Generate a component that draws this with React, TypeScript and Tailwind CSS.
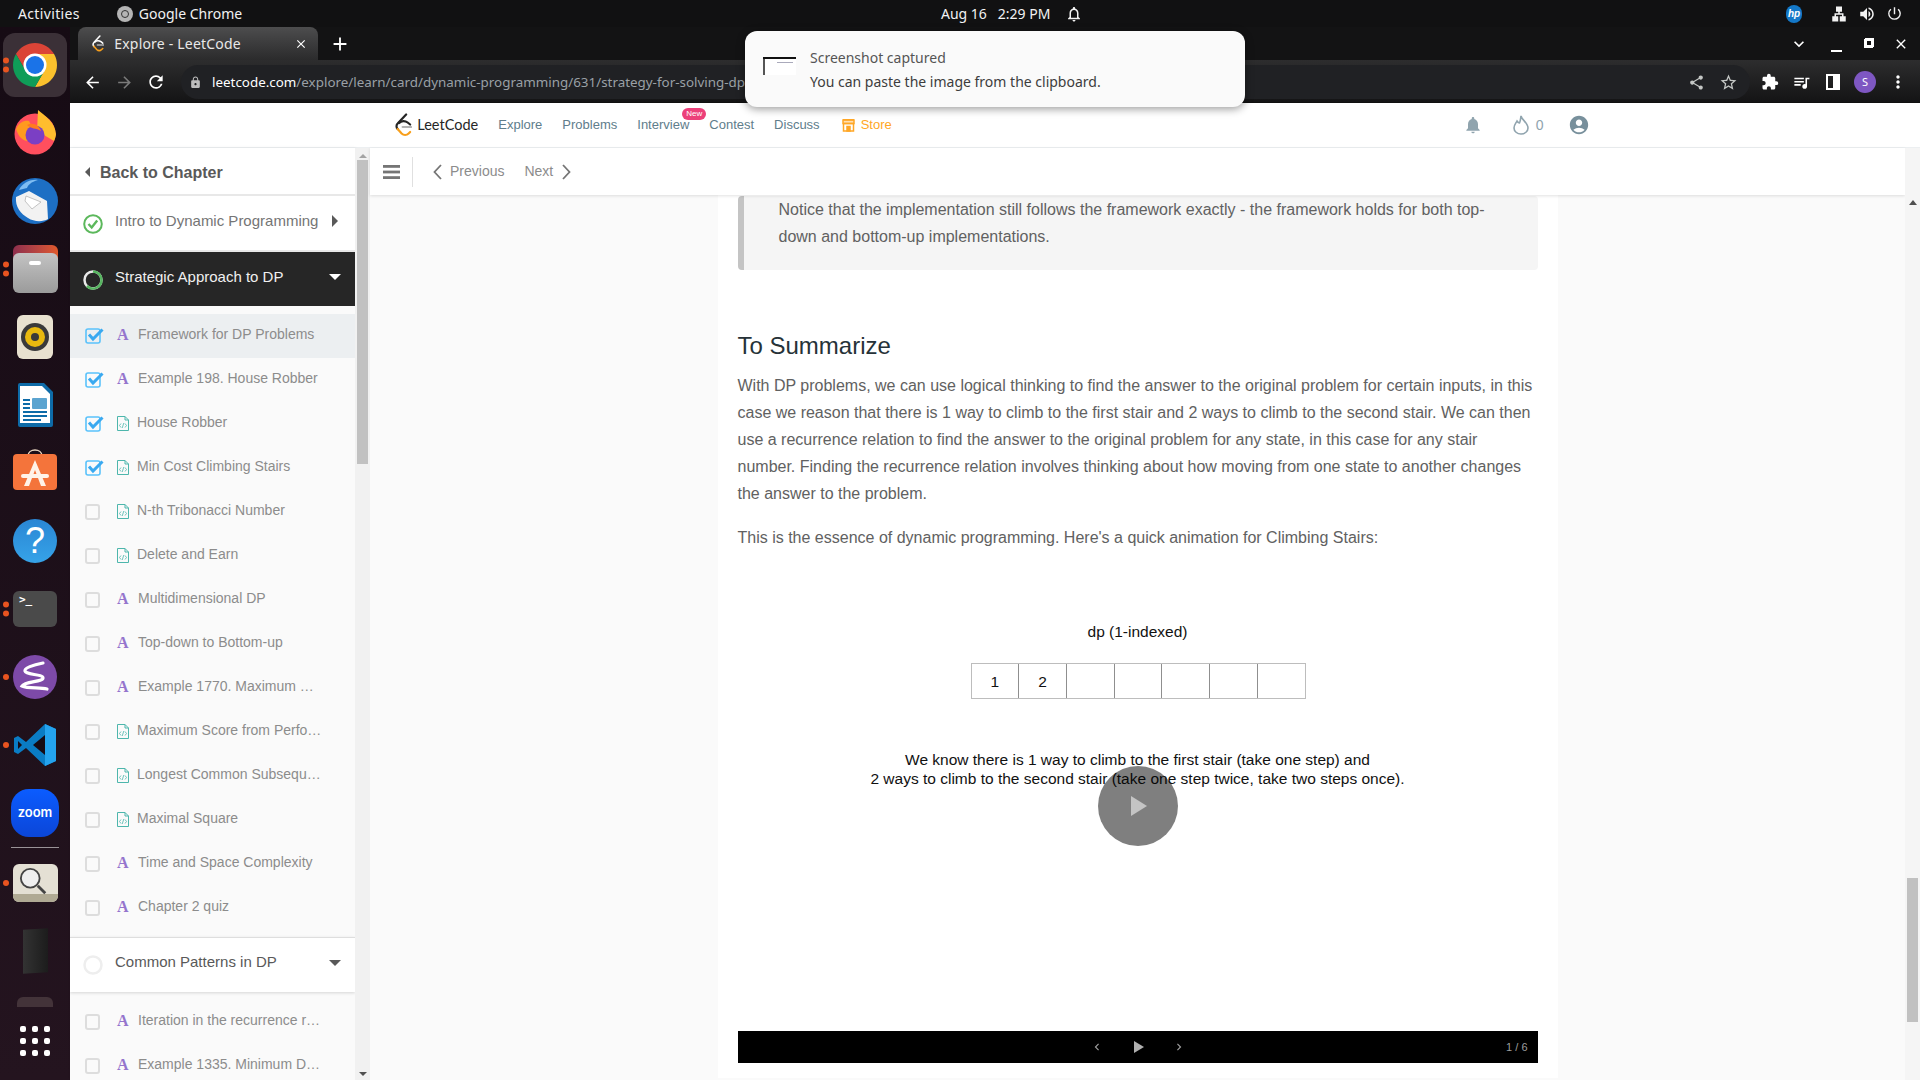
import {
  MdArrowBack,
  MdArrowForward,
  MdRefresh,
  MdLock,
  MdShare,
  MdStarBorder,
  MdExtension,
  MdQueueMusic,
  MdMoreVert,
  MdNotifications,
  MdAccountCircle,
  MdClose,
  MdAdd,
  MdKeyboardArrowDown,
  MdChevronLeft,
  MdChevronRight,
  MdVolumeUp,
  MdPowerSettingsNew,
  MdLan,
  MdNotificationsNone,
} from "react-icons/md";

type Item = { title: string; kind: "article" | "code"; done?: boolean; active?: boolean };

const chapterTwo: Item[] = [
  { title: "Framework for DP Problems", kind: "article", done: true, active: true },
  { title: "Example 198. House Robber", kind: "article", done: true },
  { title: "House Robber", kind: "code", done: true },
  { title: "Min Cost Climbing Stairs", kind: "code", done: true },
  { title: "N-th Tribonacci Number", kind: "code" },
  { title: "Delete and Earn", kind: "code" },
  { title: "Multidimensional DP", kind: "article" },
  { title: "Top-down to Bottom-up", kind: "article" },
  { title: "Example 1770. Maximum …", kind: "article" },
  { title: "Maximum Score from Perfo…", kind: "code" },
  { title: "Longest Common Subsequ…", kind: "code" },
  { title: "Maximal Square", kind: "code" },
  { title: "Time and Space Complexity", kind: "article" },
  { title: "Chapter 2 quiz", kind: "article" },
];

const chapterThree: Item[] = [
  { title: "Iteration in the recurrence r…", kind: "article" },
  { title: "Example 1335. Minimum D…", kind: "article" },
];

function ChromeLogo({ size }: { size: number }) {
  return (
    <svg width={size} height={size} viewBox="0 0 48 48">
      <path d="M24 24L14.500 29.500 4.950 13A22 22 0 0 1 43.050 13H24z" fill="#db4437" />
      <path d="M24 24V13H43.050A22 22 0 0 1 24 46L33.500 29.500z" fill="#fbc02d" />
      <path d="M24 24L33.500 29.500 24 46A22 22 0 0 1 4.950 13L14.500 29.500z" fill="#0f9d58" />
      <circle cx="24" cy="24" r="11.500" fill="#fff" />
      <circle cx="24" cy="24" r="9" fill="#1a73e8" />
    </svg>
  );
}

function LeetLogo({ size }: { size: number }) {
  return (
    <svg width={size * 0.72} height={size} viewBox="0 0 17 24" fill="none" strokeWidth="2.2" strokeLinecap="round">
      <path d="M11 1.5 L2.5 10.5 C1 12 1 14.5 2.5 16" stroke="currentColor" />
      <path d="M2.5 16 L6.5 20.5 C8.5 22.5 11.5 22.5 13.5 20.5 L15 19" stroke="#f89f1b" />
      <path d="M4 10 C6 7.5 10 7.5 12.5 9.5 L15 11.5" stroke="currentColor" />
      <path d="M7.5 14 H16" stroke="#b3b3b3" />
    </svg>
  );
}

function Dot({ extra }: { extra?: boolean }) {
  return (
    <div className="absolute left-[3px] top-1/2 flex -translate-y-1/2 flex-col gap-[3px]">
      <span className="h-[6px] w-[6px] rounded-full bg-[#e95420]" />
      {extra && <span className="h-[6px] w-[6px] rounded-full bg-[#e95420]" />}
    </div>
  );
}

function Dock() {
  return (
    <div className="flex h-[1053px] w-[70px] shrink-0 flex-col items-center bg-gradient-to-b from-[#160b14] to-[#24141f] pt-1">
      <div className="relative flex h-[68px] w-full items-center justify-center">
        <div className="flex h-16 w-16 items-center justify-center rounded-xl bg-[#3b3037]">
          <ChromeLogo size={48} />
        </div>
        <Dot extra />
      </div>
      <div className="flex h-[68px] items-start justify-center pt-[10px]">
        <svg width="44" height="46" viewBox="0 0 44 46">
          <circle cx="22" cy="25" r="20.5" fill="#ff4f5e" />
          <path d="M25 1c7 6 17 12 18 24 0 2-1 5-2 7L24 22z" fill="#ffbd2e" />
          <path d="M3 20c3-7 9-9 13-8l6 12-8 8C8 31 5 26 3 20z" fill="#ff9a1f" />
          <circle cx="22" cy="26" r="9.5" fill="#7b3fc4" />
          <path d="M14 16c6-3 12 0 14 6-5-3-10-2-14-6z" fill="#ff7a1f" />
        </svg>
      </div>
      <div className="flex h-[68px] items-center justify-center">
        <svg width="48" height="48" viewBox="0 0 48 48">
          <circle cx="24" cy="24" r="23" fill="#1d6fc4" />
          <path d="M8 13c3-6 10-11 19-10-7 2-10 5-11 8z" fill="#7fbdf2" />
          <path d="M5 20l13-6 18 10 1 18c-5 3-14 3-20-1C10 37 4 30 5 20z" fill="#f2f2f2" />
          <path d="M15 19l15 6-9 7-7-8z" fill="#fff" stroke="#b5b5b5" strokeWidth="0.8" />
        </svg>
      </div>
      <div className="relative flex h-[68px] w-full items-center justify-center">
        <div className="relative h-[48px] w-[45px]">
          <div className="absolute left-0 top-0 h-[20px] w-full rounded-t-md bg-gradient-to-r from-[#8d2f4c] to-[#e0592a]" />
          <div className="absolute bottom-0 left-0 flex h-[40px] w-full justify-center rounded-md bg-gradient-to-b from-[#c3c3c3] to-[#9b9b9b] pt-2">
            <span className="h-1 w-3 rounded-sm bg-white" />
          </div>
        </div>
        <Dot extra />
      </div>
      <div className="flex h-[68px] items-center justify-center">
        <div className="flex h-[44px] w-[36px] items-center justify-center rounded-md bg-[#e8e1cf]">
          <div className="flex h-7 w-7 items-center justify-center rounded-full bg-[#3a3a3a]">
            <div className="flex h-[20px] w-[20px] items-center justify-center rounded-full bg-[#e8b90f]">
              <span className="h-2 w-2 rounded-full bg-[#3a3a3a]" />
            </div>
          </div>
        </div>
      </div>
      <div className="flex h-[68px] items-center justify-center">
        <svg width="38" height="46" viewBox="0 0 38 46">
          <path d="M2 3a2 2 0 0 1 2-2h24l9 9v33a2 2 0 0 1-2 2H4a2 2 0 0 1-2-2z" fill="#0d6ba8" />
          <path d="M4 4h22l8 8v29H4z" fill="#fff" />
          <path d="M7 17h7v2H7zm0 4h7v2H7zm0 4h7v2H7zm-0 4h24v2H7zm0 4h24v2H7zm0 4h18v2H7z" fill="#0d6ba8" />
          <rect x="16" y="16" width="15" height="11" rx="1" fill="#5ba4d0" />
        </svg>
      </div>
      <div className="flex h-[68px] items-start justify-center pt-[9px]">
        <svg width="44" height="46" viewBox="0 0 44 46">
          <path d="M15 8c0-8 14-8 14 0" fill="none" stroke="#e8d5c0" strokeWidth="1.5" />
          <rect y="6" width="44" height="36" rx="4" fill="#f4743b" />
          <path d="M22 12 L33 38 H28 L22 22 L16 38 H11z" fill="#fff3e8" />
          <rect x="8" y="26" width="28" height="4" rx="2" fill="#fff3e8" />
        </svg>
      </div>
      <div className="flex h-[68px] items-center justify-center">
        <div className="flex h-[44px] w-[44px] items-center justify-center rounded-full bg-gradient-to-b from-[#2a86d4] to-[#36a3e8] font-['Liberation_Sans',sans-serif] text-[36px] leading-none text-white">
          ?
        </div>
      </div>
      <div className="relative flex h-[68px] w-full items-center justify-center">
        <div className="h-[36px] w-[44px] rounded-md bg-[#4a4a4a] pl-[6px] font-['DejaVu_Sans_Mono',monospace] text-[11px] font-bold leading-[18px] text-white">
          &gt;_
        </div>
        <Dot extra />
      </div>
      <div className="relative flex h-[68px] w-full items-center justify-center">
        <svg width="44" height="46" viewBox="0 0 44 46">
          <circle cx="22" cy="23" r="22" fill="#7d4aa8" />
          <path d="M30 9C20 11 11 14 12 17c1 4 18 3 18 7S12 27 9 32c6 3 18 1 25 3" fill="none" stroke="#fff" strokeWidth="3.2" strokeLinecap="round" />
        </svg>
        <Dot />
      </div>
      <div className="relative flex h-[68px] w-full items-center justify-center">
        <svg width="44" height="44" viewBox="0 0 44 44">
          <path d="M32 1 L43 6 V38 L32 43 L13 25 L5 31 L1 29 V15 L5 13 L13 19z" fill="#0a7cc4" />
          <path d="M32 1 L43 6 V38 L32 43z" fill="#24a3ee" />
          <path d="M32 12 L20 22 L32 32z" fill="#160b14" />
          <path d="M5 18 L9 22 L5 26z" fill="#160b14" />
        </svg>
        <Dot />
      </div>
      <div className="flex h-[68px] items-center justify-center">
        <div className="flex h-12 w-12 items-center justify-center rounded-[18px] bg-gradient-to-b from-[#0b5cff] to-[#0b46d8] font-['Inter',sans-serif] text-[13px] font-semibold text-white">
          zoom
        </div>
      </div>
      <div className="mb-px h-px w-12 bg-[#9a9397]" />
      <div className="relative flex h-[68px] w-full items-center justify-center">
        <div className="relative h-[38px] w-[45px] rounded-md bg-[#e4e0d4]">
          <span className="absolute bottom-0 left-0 h-2 w-full rounded-b-md bg-[#b0aa94]" />
          <svg className="absolute left-[6px] top-[3px]" width="30" height="30" viewBox="0 0 32 32" fill="none" stroke="#444" strokeWidth="2">
            <circle cx="12" cy="12" r="10" fill="#efefef" />
            <path d="M20 20l8 8" strokeWidth="3" />
          </svg>
        </div>
        <Dot />
      </div>
      <div className="flex h-[68px] items-center justify-center">
        <div className="h-[44px] w-[25px] -skew-y-3 bg-gradient-to-r from-[#333333] to-[#1c1c1c]" />
      </div>
      <div className="mt-3 h-[10px] w-[36px] rounded-t-md bg-[#433339]" />
      <div className="mt-[19px] grid grid-cols-3 gap-[6px]">
        {Array.from({ length: 9 }).map((_, i) => (
          <span key={i} className="h-[6px] w-[6px] rounded-[2px] bg-white" />
        ))}
      </div>
    </div>
  );
}

function TopBar() {
  return (
    <div className="relative flex h-[27px] items-center bg-[#111112] font-['Noto_Sans',sans-serif] text-[14px] text-[#f2f2f2]">
      <span className="ml-[18px] tracking-[0.35px]">Activities</span>
      <span className="ml-[37px] flex h-4 w-4 items-center justify-center rounded-full bg-[#b5b5b5]">
        <span className="h-2 w-2 rounded-full border border-[#333]" />
      </span>
      <span className="ml-[6px]">Google Chrome</span>
      <div className="absolute left-[941px] flex items-center">
        <span className="whitespace-pre">Aug 16   2:29 PM</span>
        <MdNotificationsNone className="ml-[15px] text-[18px]" />
      </div>
      <div className="ml-auto mr-[17px] flex items-center">
        <span className="flex h-[18px] w-4 items-center justify-center rounded-full bg-[#1478c8] font-['Liberation_Sans',sans-serif] text-[10px] font-bold italic leading-none text-white">
          hp
        </span>
        <MdLan className="ml-[28px] text-[18px]" />
        <MdVolumeUp className="ml-[10px] text-[18px]" />
        <MdPowerSettingsNew className="ml-[10px] text-[17px]" />
      </div>
    </div>
  );
}

function ChromeFrame() {
  return (
    <div className="font-['Noto_Sans',sans-serif]">
      <div className="flex h-[33px] items-end bg-[#131314] pl-2">
        <div className="flex h-[33px] w-[240px] items-center rounded-t-lg bg-gradient-to-b from-[#4d4d4e] to-[#2b2b2c] pl-[14px] pr-[10px] text-[14px] text-[#e8e8e8]">
          <span className="text-white">
            <LeetLogo size={17} />
          </span>
          <span className="ml-[10px] tracking-[0.2px]">Explore - LeetCode</span>
          <MdClose className="ml-auto text-[14px] text-white" />
        </div>
        <div className="mb-[2px] ml-2 flex h-7 w-7 items-center justify-center text-white">
          <MdAdd className="text-[22px]" />
        </div>
        <div className="ml-auto mr-[11px] flex items-center self-center text-white">
          <MdKeyboardArrowDown className="mr-[22px] text-[20px]" />
          <span className="mt-[14px] h-[2px] w-[11px] bg-white" />
          <span className="relative ml-[22px] h-[9px] w-[9px] border-2 border-white">
            <span className="absolute -right-[3px] -top-[3px] h-[9px] w-[9px] border-2 border-white" />
          </span>
          <MdClose className="ml-5 text-[16px]" />
        </div>
      </div>
      <div className="flex h-[43px] items-center border-b border-[#101010] bg-gradient-to-b from-[#2d2d2e] to-[#141415] pl-[13px] pt-[2px] text-white">
        <MdArrowBack className="text-[19px]" />
        <MdArrowForward className="ml-[13px] text-[19px] text-[#7a7a7a]" />
        <MdRefresh className="ml-3 text-[20px]" />
        <div className="ml-[15px] flex h-[34px] w-[1569px] items-center rounded-full bg-[#202124] pl-2 pr-3 text-[13.4px]">
          <MdLock className="text-[13px] text-[#bdbdbd]" />
          <span className="ml-[10px] whitespace-nowrap">
            <span className="text-white">leetcode.com</span>
            <span className="text-[#9aa0a6]">/explore/learn/card/dynamic-programming/631/strategy-for-solving-dp-</span>
          </span>
          <MdShare className="ml-auto text-[17px] text-[#c4c7c5]" />
          <MdStarBorder className="ml-[14px] text-[19px] text-[#c4c7c5]" />
        </div>
        <MdExtension className="ml-[11px] text-[18px]" />
        <MdQueueMusic className="ml-[13px] text-[19px]" />
        <span className="ml-[15px] h-[16px] w-[14px] border-y-2 border-l-2 border-r-[7px] border-white" />
        <span className="ml-[14px] flex h-[22px] w-[22px] items-center justify-center rounded-full bg-[#7e57c2] text-[11px]">S</span>
        <MdMoreVert className="ml-3 text-[20px]" />
      </div>
    </div>
  );
}

function Notification() {
  return (
    <div className="absolute left-[745px] top-[31px] flex h-[76px] w-[500px] rounded-xl bg-[#fafafa] font-['Noto_Sans',sans-serif] text-[14px] text-[#3d3d3d] shadow-[0_2px_8px_rgba(0,0,0,0.4)]">
      <div className="ml-[18px] mt-[26px] h-[18px] w-[33px] bg-white">
        <div className="h-[2px] w-full bg-[#111]" />
        <div className="flex">
          <div className="h-4 w-[2px] bg-[#555]" />
          <div className="ml-3 mt-[3px] h-px w-4 bg-[#aab]" />
        </div>
      </div>
      <div className="ml-[14px] mt-[15px] leading-[24px]">
        <div className="text-[#555]">Screenshot captured</div>
        <div>You can paste the image from the clipboard.</div>
      </div>
    </div>
  );
}

function SiteHeader() {
  const links = ["Explore", "Problems", "Interview", "Contest", "Discuss"];
  return (
    <div className="flex h-[45px] items-center border-b border-[#eceff1] bg-white pl-[325px] font-['Liberation_Sans',sans-serif] text-[13px] text-[#607d8b]">
      <span className="text-[#262626]">
        <LeetLogo size={24} />
      </span>
      <span className="ml-[5px] w-[81px] font-['Lato',sans-serif] text-[14.5px] text-[#262626]">LeetCode</span>
      {links.map((link) => (
        <span key={link} className="relative mr-[20px]">
          {link}
          {link === "Interview" && (
            <span className="absolute -right-[17px] -top-[7px] flex h-[12px] w-[24px] items-center justify-center rounded-full bg-[#ec407a] text-[8px] text-white">
              New
            </span>
          )}
        </span>
      ))}
      <svg className="ml-[2px]" width="13" height="13" viewBox="0 0 13 13" fill="none" stroke="#ffa726" strokeWidth="1.5">
        <path d="M1 .8h11M1 4.500h11M1.500 4.500v7.500h10V4.500" />
        <rect x="1" y="1" width="11" height="3.500" fill="#ffa726" fillOpacity="0.35" />
        <path d="M5 7.500h3v4.500H5z" fill="#ffa726" />
      </svg>
      <span className="ml-[6px] text-[#ffa726]">Store</span>
      <MdNotifications className="ml-[571px] text-[20px] text-[#90a4ae]" />
      <svg className="ml-[30px]" width="16" height="20" viewBox="0 0 16 20" fill="none" stroke="#90a4ae" strokeWidth="1.6">
        <path d="M8 1c1 4 7 7 7 12a7 6 0 0 1-14 0c0-3 2-5 3-7 1 1.500 2 2 2.500 2C7.500 6 7.500 4 8 1z" />
      </svg>
      <span className="ml-[7px] text-[14px] text-[#90a4ae]">0</span>
      <MdAccountCircle className="ml-[24px] text-[22px] text-[#78909c]" />
    </div>
  );
}

function Checkbox({ done }: { done?: boolean }) {
  if (done) {
    return (
      <svg className="shrink-0" width="19" height="16" viewBox="0 0 19 16" fill="none">
        <rect x="1" y="1" width="14" height="14" rx="2" stroke="#5ac2fb" strokeWidth="1.6" />
        <path d="M4 6.500 L8 11 L17.500 1.500" stroke="#3aa9f0" strokeWidth="3" />
      </svg>
    );
  }
  return <span className="mr-1 h-4 w-[15px] shrink-0 rounded-[3px] border-2 border-[#dddddd]" />;
}

function LessonIcon({ kind }: { kind: Item["kind"] }) {
  if (kind === "article") {
    return (
      <span className="w-[21px] shrink-0 font-['Liberation_Serif',serif] text-[16px] font-bold leading-none text-[#9575cd]">
        A
      </span>
    );
  }
  return (
    <svg className="mr-[8px] shrink-0" width="12" height="15" viewBox="0 0 12 15" fill="none" stroke="#4db6ac" strokeWidth="1">
      <path d="M.5.500h7.500l3.500 3.500v10.500H.500z" />
      <path d="M8 .500V4h3.500" />
      <path d="M4 7.500L2.500 9.500 4 11.500M8 7.500l1.500 2L8 11.500M6.800 7L5.200 12" strokeWidth="0.8" />
    </svg>
  );
}

function LessonRow({ item }: { item: Item }) {
  return (
    <div className={`flex h-11 items-center pl-[15px] pr-[30px] ${item.active ? "bg-[#eceff1]" : ""}`}>
      <Checkbox done={item.done} />
      <span className="ml-[13px] -mt-[2px] flex items-center">
        <LessonIcon kind={item.kind} />
      </span>
      <span className="-mt-[4px] min-w-0 whitespace-nowrap text-[14px] text-[#8c8c8c]">{item.title}</span>
    </div>
  );
}

function ScrollTrack({ thumb }: { thumb: string }) {
  return (
    <div className="flex h-full w-[15px] shrink-0 flex-col items-center bg-[#f1f1f1]">
      <span className="mt-[6px] h-0 w-0 border-x-[4px] border-b-[4px] border-x-transparent border-b-[#a3a3a3]" />
      <span className={`w-[11px] bg-[#c1c1c1] ${thumb}`} />
      <span className="mb-[4px] mt-auto h-0 w-0 border-x-[4px] border-t-[4px] border-x-transparent border-t-[#505050]" />
    </div>
  );
}

function Sidebar() {
  return (
    <div className="flex h-[932px] w-[300px] shrink-0">
      <div className="w-[285px] overflow-hidden bg-[#fafafa] shadow-[1px_0_3px_rgba(0,0,0,0.08)]">
        <div className="flex h-12 items-center border-b-2 border-[#e8e8e8] bg-white pl-[15px] text-[16px] font-bold text-[#595959]">
          <span className="mt-[2px] h-0 w-0 border-y-[5px] border-r-[5px] border-y-transparent border-r-[#595959]" />
          <span className="ml-[10px] mt-[3px]">Back to Chapter</span>
        </div>
        <div className="flex h-[56px] items-center border-b-2 border-[#e8e8e8] bg-white pl-[13px]">
          <svg className="mt-[2px] shrink-0" width="20" height="20" viewBox="0 0 20 20" fill="none">
            <circle cx="10" cy="10" r="8.800" stroke="#5cb85c" strokeWidth="2" />
            <path d="M5.500 10l3.200 3.500 5.500-7" stroke="#5cb85c" strokeWidth="2.400" />
          </svg>
          <span className="ml-[12px] -mt-[4px] text-[15px] text-[#757575]">Intro to Dynamic Programming</span>
          <span className="ml-[14px] -mt-[4px] h-0 w-0 border-y-[6px] border-l-[6px] border-y-transparent border-l-[#595959]" />
        </div>
        <div className="flex h-[54px] items-center bg-[#262626] pl-[13px] text-[15px] text-[#f0f0f0]">
          <svg className="mt-[2px] shrink-0" width="20" height="20" viewBox="0 0 20 20" fill="none">
            <circle cx="10" cy="10" r="8.500" stroke="#e8e8e8" strokeWidth="2.500" />
            <path d="M10 1.500A8.500 8.500 0 0 1 18.500 10a8.500 8.500 0 0 1-4 7.200A8.500 8.500 0 0 1 4 16" stroke="#57b560" strokeWidth="2.500" />
          </svg>
          <span className="ml-[12px] -mt-[4px]">Strategic Approach to DP</span>
          <span className="ml-auto mr-[14px] -mt-[4px] h-0 w-0 border-x-[6px] border-t-[6px] border-x-transparent border-t-white" />
        </div>
        <div className="pt-2 pb-[7px]">
          {chapterTwo.map((item) => (
            <LessonRow key={item.title} item={item} />
          ))}
        </div>
        <div className="flex h-[55px] items-center border-t border-[#dedede] bg-white pl-[13px] text-[15px] text-[#595959] shadow-[0_1px_3px_rgba(0,0,0,0.15)]">
          <svg className="shrink-0" width="20" height="20" viewBox="0 0 20 20" fill="none">
            <circle cx="10" cy="10" r="8.500" stroke="#eeeeee" strokeWidth="2.500" />
          </svg>
          <span className="ml-[12px] -mt-[6px]">Common Patterns in DP</span>
          <span className="ml-auto mr-[14px] -mt-[4px] h-0 w-0 border-x-[6px] border-t-[6px] border-x-transparent border-t-[#595959]" />
        </div>
        <div className="pt-2">
          {chapterThree.map((item) => (
            <LessonRow key={item.title} item={item} />
          ))}
        </div>
      </div>
      <ScrollTrack thumb="mt-[2px] h-[304px]" />
    </div>
  );
}

function Animation() {
  return (
    <div className="relative mt-[72px] font-['Liberation_Sans',sans-serif] text-[15.5px] text-[#111]">
      <div className="text-center leading-[18px]">dp (1-indexed)</div>
      <div className="ml-[233px] mt-[22px] flex h-[36px] w-[335px] border border-[#bdbdbd]">
        {["1", "2", "", "", "", "", ""].map((value, i) => (
          <div key={i} className="flex flex-1 items-center justify-center border-r border-[#8f8f8f] last:border-r-0">
            {value}
          </div>
        ))}
      </div>
      <div className="mt-[51px] text-center leading-[19px]">
        <div>We know there is 1 way to climb to the first stair (take one step) and</div>
        <div>2 ways to climb to the second stair (take one step twice, take two steps once).</div>
      </div>
      <div className="absolute left-[360px] top-[143px] flex h-20 w-20 items-center justify-center rounded-full bg-[rgba(0,0,0,0.5)]">
        <span className="ml-[2px] h-0 w-0 border-y-[10px] border-l-[16px] border-y-transparent border-l-[#c4c4c4]" />
      </div>
      <div className="h-[243px]" />
      <div className="relative flex h-8 items-center justify-center bg-black text-[#9e9e9e]">
        <MdChevronLeft className="text-[14px]" />
        <span className="ml-[30px] h-0 w-0 border-y-[6px] border-l-[10px] border-y-transparent border-l-[#b0b0b0]" />
        <MdChevronRight className="ml-7 text-[14px]" />
        <span className="absolute right-[10px] text-[11px]">1 / 6</span>
      </div>
    </div>
  );
}

function Article() {
  return (
    <div className="flex min-w-0 flex-1 justify-center overflow-hidden bg-[#fafafa]">
      <div className="h-[883px] w-[840px] bg-white px-5 pt-px text-[16px] leading-[27px] text-[#616161]">
        <div className="rounded border-l-[6px] border-[#c4c4c4] bg-[#f5f5f5] pb-5 pl-[35px] pr-[30px]">
          Notice that the implementation still follows the framework exactly - the framework holds for both top-down and bottom-up implementations.
        </div>
        <h2 className="mt-[63px] text-[24px] leading-[26px] text-[#263238]">To Summarize</h2>
        <p className="mt-[13px]">
          With DP problems, we can use logical thinking to find the answer to the original problem for certain inputs, in this case we reason that there is 1 way to climb to the first stair and 2 ways to climb to the second stair. We can then use a recurrence relation to find the answer to the original problem for any state, in this case for any stair number. Finding the recurrence relation involves thinking about how moving from one state to another changes the answer to the problem.
        </p>
        <p className="mt-[17px]">This is the essence of dynamic programming. Here's a quick animation for Climbing Stairs:</p>
        <Animation />
      </div>
    </div>
  );
}

function LessonPane() {
  return (
    <div className="flex h-[932px] min-w-0 flex-1">
      <div className="flex min-w-0 flex-1 flex-col">
        <div className="relative z-10 flex h-[47px] shrink-0 items-center bg-white pl-[13px] text-[14px] text-[#8c8c8c] shadow-[0_1px_3px_rgba(0,0,0,0.12)]">
          <svg width="17" height="14" viewBox="0 0 17 14" fill="#757575">
            <rect width="17" height="2.800" />
            <rect y="5.600" width="17" height="2.800" />
            <rect y="11.200" width="17" height="2.800" />
          </svg>
          <span className="ml-3 h-[30px] w-px bg-[#e0e0e0]" />
          <svg className="ml-5" width="9" height="16" viewBox="0 0 9 16" fill="none" stroke="#757575" strokeWidth="1.800">
            <path d="M8 1L1.500 8 8 15" />
          </svg>
          <span className="ml-2">Previous</span>
          <span className="ml-5">Next</span>
          <svg className="ml-[9px]" width="9" height="16" viewBox="0 0 9 16" fill="none" stroke="#757575" strokeWidth="1.800">
            <path d="M1 1l6.500 7L1 15" />
          </svg>
        </div>
        <Article />
      </div>
      <div className="relative z-10 flex h-full w-[15px] shrink-0 flex-col items-center bg-[#f5f5f5]">
        <span className="mt-[52px] h-0 w-0 border-x-[4px] border-b-[5px] border-x-transparent border-b-[#505050]" />
        <span className="mt-[673px] h-[144px] w-[11px] bg-[#c1c1c1]" />
      </div>
    </div>
  );
}

export default function App() {
  return (
    <div className="relative h-screen w-full overflow-hidden bg-[#fafafa] font-['Liberation_Sans',sans-serif]">
      <TopBar />
      <div className="flex">
        <Dock />
        <div className="min-w-0 flex-1">
          <ChromeFrame />
          <SiteHeader />
          <div className="flex">
            <Sidebar />
            <LessonPane />
          </div>
        </div>
      </div>
      <Notification />
    </div>
  );
}
